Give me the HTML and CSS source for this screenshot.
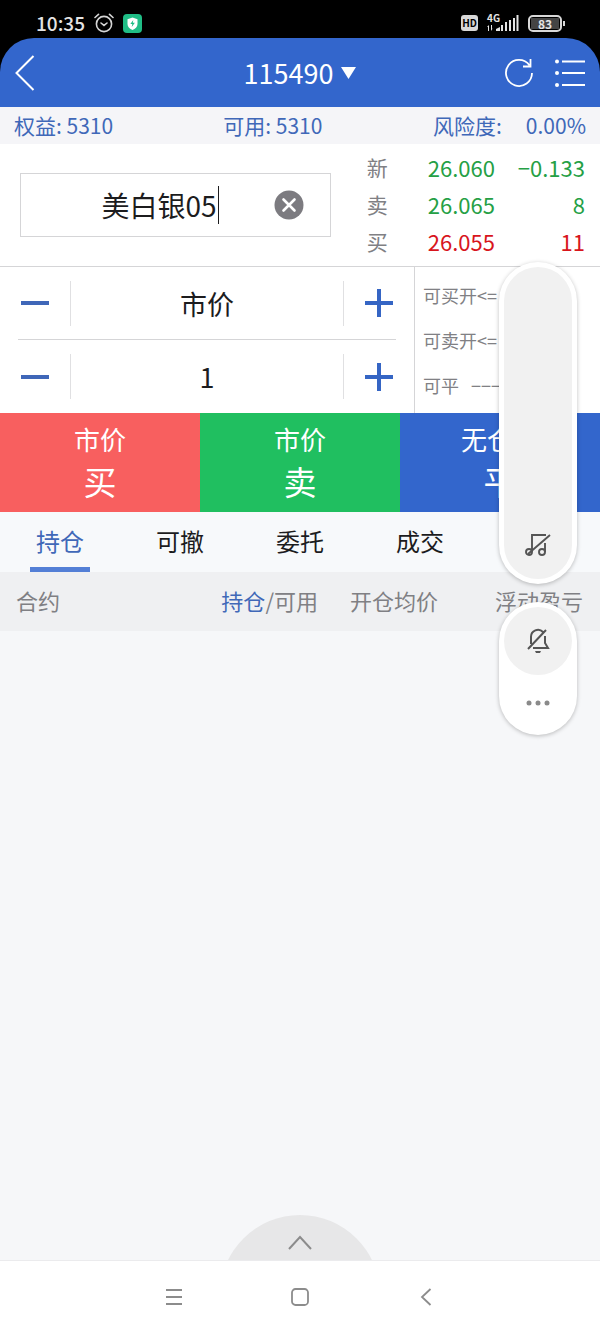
FILE: index.html
```
<!DOCTYPE html>
<html lang="zh-CN">
<head>
  <meta charset="UTF-8">
  <meta name="viewport" content="width=device-width, initial-scale=1.0">
  <title>115490</title>
  <link rel="stylesheet" href="styles.css">
</head>
<body>
  <div class="screen">
    <div class="status-bar">
      <span class="clock">10:35</span>
      <svg class="alarm" width="20" height="20" viewBox="0 0 20 20" fill="none" stroke="#d5d5d5" stroke-width="1.6" stroke-linecap="round">
        <circle cx="10" cy="11" r="7.6"/>
        <path d="M1 4.5 4.5 1.4M19 4.5 15.5 1.4M7 10l3 2.4 3-2.4"/>
      </svg>
      <svg width="19" height="19" viewBox="0 0 19 19">
        <rect width="19" height="19" rx="4" fill="#20bd86"/>
        <path d="M9.500 3.500 14.500 5.300V10c0 3-2.300 4.800-5 6-2.700-1.200-5-3-5-6V5.300z" fill="#fff"/>
        <path d="M10.300 6 7.300 10h2L8.700 13l3.200-4.200H9.800z" fill="#20bd86"/>
      </svg>
      <span class="spacer"></span>
      <span class="hd">HD</span>
      <span class="network">
        <span class="network-type">4G</span>
        <svg width="32" height="17" viewBox="0 0 32 17" fill="#e4e4e4">
          <path d="M0 12l2-2v6h-1v-4zM4 10h1v4l1-1-2 3z"/>
          <path d="M9 16v-2l4-2v4zM14 10h2v6h-2zM18 7h2v9h-2zM22 5h2v11h-2zM26 3h2v13h-2zM29.500 0h2v16h-2z"/>
        </svg>
      </span>
      <span class="battery"><span class="battery-level">83</span></span>
    </div>

    <header class="header">
      <button class="icon-btn back" aria-label="返回">
        <svg width="20" height="36" viewBox="0 0 20 36" fill="none" stroke="#fff" stroke-width="2"><path d="M18.500 1 1.500 18l17 17"/></svg>
      </button>
      <button class="account">115490
        <svg width="15" height="12" viewBox="0 0 15 12"><path d="M0 0h15L7.500 12z" fill="#fff"/></svg>
      </button>
      <div class="header-actions">
        <button class="icon-btn" aria-label="刷新">
          <svg width="30" height="30" viewBox="0 0 30 30" fill="none" stroke="#fff" stroke-width="1.800"><path d="M28 15A13 13 0 1 1 25.500 7.300M26.500 1v7.500H19"/></svg>
        </button>
        <button class="icon-btn" aria-label="菜单">
          <svg width="30" height="28" viewBox="0 0 30 28" fill="#fff"><path d="M7 1.500h23v2H7zM7 13h23v2H7zM7 25h23v2H7z"/><circle cx="2" cy="2.500" r="2"/><circle cx="2" cy="14" r="2"/><circle cx="2" cy="26" r="2"/></svg>
        </button>
      </div>
    </header>

    <div class="funds">
      <span>权益: 5310</span>
      <span>可用: 5310</span>
      <span class="risk"><span>风险度:</span><span>0.00%</span></span>
    </div>

    <section class="quote">
      <div class="contract">
        <input class="contract-input" type="text" aria-label="合约" value="美白银05">
        <button class="icon-btn" aria-label="清除">
          <svg width="30" height="30" viewBox="0 0 30 30"><circle cx="15" cy="15" r="14.500" fill="#7c7b80"/><path d="M9.500 9.500l11 11M20.500 9.500l-11 11" stroke="#fff" stroke-width="2.600" stroke-linecap="round"/></svg>
        </button>
      </div>
      <table class="prices">
        <tr class="down"><th scope="row">新</th><td>26.060</td><td>−0.133</td></tr>
        <tr class="down"><th scope="row">卖</th><td>26.065</td><td>8</td></tr>
        <tr class="up"><th scope="row">买</th><td>26.055</td><td>11</td></tr>
      </table>
    </section>

    <section class="order">
      <div class="steppers">
        <div class="stepper">
          <button class="icon-btn" aria-label="减价">
            <svg width="28" height="28" viewBox="0 0 28 28"><path d="M0 12h28v4H0z" fill="#3f67b8"/></svg>
          </button>
          <input type="text" aria-label="价格" value="市价">
          <button class="icon-btn" aria-label="加价">
            <svg width="28" height="28" viewBox="0 0 28 28"><path d="M0 12h12V0h4v12h12v4H16v12h-4V16H0z" fill="#3565c4"/></svg>
          </button>
        </div>
        <div class="stepper">
          <button class="icon-btn" aria-label="减少手数">
            <svg width="28" height="28" viewBox="0 0 28 28"><path d="M0 12h28v4H0z" fill="#3f67b8"/></svg>
          </button>
          <input type="text" aria-label="手数" value="1">
          <button class="icon-btn" aria-label="增加手数">
            <svg width="28" height="28" viewBox="0 0 28 28"><path d="M0 12h12V0h4v12h12v4H16v12h-4V16H0z" fill="#3565c4"/></svg>
          </button>
        </div>
      </div>
      <div class="limits">
        <span>可买开&lt;=</span>
        <span>可卖开&lt;=</span>
        <span class="closable"><span>可平</span><span>−−−</span></span>
      </div>
    </section>

    <div class="trade">
      <button class="buy"><span>市价</span><strong>买</strong></button>
      <button class="sell"><span>市价</span><strong>卖</strong></button>
      <button class="close"><span>无仓位</span><strong>平</strong></button>
    </div>

    <nav class="tabs">
      <a href="#" class="active">持仓</a>
      <a href="#">可撤</a>
      <a href="#">委托</a>
      <a href="#">成交</a>
    </nav>

    <table class="positions">
      <thead>
        <tr><th>合约</th><th><b>持仓</b>/可用</th><th>开仓均价</th><th>浮动盈亏</th></tr>
      </thead>
    </table>

    <main class="list">
      <button class="icon-btn" aria-label="展开">
        <svg width="144" height="45" viewBox="0 0 144 45"><circle cx="72" cy="80" r="80" fill="#e7e7e8"/><path d="M61 34l11-12 11 12" fill="none" stroke="#8c8c8c" stroke-width="2"/></svg>
      </button>
    </main>

    <nav class="system-nav">
      <button class="icon-btn" aria-label="最近任务">
        <svg width="18" height="18" viewBox="0 0 18 18" stroke="#8c8c8c" stroke-width="1.800"><path d="M1 2h16M1 9h16M1 16h16"/></svg>
      </button>
      <button class="icon-btn" aria-label="主页">
        <svg width="18" height="18" viewBox="0 0 18 18" fill="none" stroke="#8c8c8c" stroke-width="1.800"><rect x="1" y="1" width="16" height="16" rx="3.500"/></svg>
      </button>
      <button class="icon-btn" aria-label="返回">
        <svg width="18" height="18" viewBox="0 0 18 18" fill="none" stroke="#8c8c8c" stroke-width="1.800"><path d="M13.500 1 5 9l8.500 8"/></svg>
      </button>
    </nav>

    <!-- volume panel floats over the page -->
    <div class="volume">
      <div class="pill">
        <button class="track" aria-label="媒体音量">
          <svg width="26" height="24" viewBox="0 0 26 24" fill="none" stroke="#555" stroke-width="1.900"><path d="M7 19V2h14M20 10v9M3 21 25 2"/><circle cx="4" cy="19" r="3"/><circle cx="17" cy="19" r="3"/></svg>
        </button>
      </div>
      <div class="pill">
        <button class="mute" aria-label="静音">
          <svg width="24" height="26" viewBox="0 0 24 26" fill="none" stroke="#555" stroke-width="2"><path d="M5 16V9a7 7 0 0 1 12-5M19 8v7l3 5H7M2 21 20 2"/><path d="M9 23h6l-1 2h-4z" fill="#555" stroke="none"/></svg>
        </button>
        <button class="more" aria-label="更多">
          <svg width="24" height="6" viewBox="0 0 24 6" fill="#8a8a8a"><circle cx="3" cy="3" r="2.500"/><circle cx="12" cy="3" r="2.500"/><circle cx="21" cy="3" r="2.500"/></svg>
        </button>
      </div>
    </div>
  </div>
</body>
</html>
```
FILE: styles.css
```
:root {
  --blue: #3366cc;
  --text-blue: #4068b8;
  --red: #f85f5f;
  --green: #20bf60;
  --gray: #808084;
  --line: #d5d5d7;
  --page-bg: #f6f7f9;
}

* {
  box-sizing: border-box;
}

body {
  margin: 0;
  background: var(--page-bg);
  color: #1c1c1e;
  font-family: "Noto Sans CJK SC", sans-serif;
}

button,
input {
  font-family: inherit;
  color: inherit;
  margin: 0;
  padding: 0;
  border: none;
  background: none;
  outline: none;
}

button {
  cursor: pointer;
}

svg {
  display: block;
}

table {
  border-collapse: collapse;
}

th {
  font-weight: normal;
}

.screen {
  position: relative;
  display: flex;
  flex-direction: column;
  min-height: 100vh;
}

.icon-btn {
  display: flex;
  align-items: center;
  justify-content: center;
}

/* status bar */
.status-bar {
  display: flex;
  align-items: center;
  gap: 9px;
  height: 38px;
  padding: 8px 38px 0 36px;
  background: #000;
  color: #e4e4e4;
}

.clock {
  font-size: 19px;
  font-weight: 500;
  line-height: 20px;
}

.spacer {
  flex: 1;
}

.hd {
  padding: 0 1px;
  border-radius: 3px;
  background: #d8d8d8;
  color: #000;
  font-size: 10px;
  font-weight: 700;
  line-height: 16px;
}

.network {
  position: relative;
}

.network-type {
  position: absolute;
  top: -2px;
  left: 0;
  font-size: 10px;
  font-weight: 700;
  line-height: 9px;
}

.battery {
  position: relative;
  width: 34px;
  padding: 1px;
  border: 2px solid #d8d8d8;
  border-radius: 5px;
}

.battery::after {
  content: "";
  position: absolute;
  top: 4px;
  right: -5px;
  width: 2px;
  height: 5px;
  background: #d8d8d8;
}

.battery-level {
  display: block;
  background: #444;
  font-size: 12px;
  font-weight: 700;
  line-height: 11px;
  text-align: center;
}

/* header */
.header {
  display: grid;
  grid-template-columns: 1fr auto 1fr;
  align-items: center;
  height: 69px;
  padding: 0 15px;
  border-radius: 34px 34px 0 0;
  background: var(--blue);
  box-shadow: 0 -34px 0 34px #000;
  clip-path: inset(0);
  color: #fff;
}

.header .back {
  justify-self: start;
}

.account {
  display: flex;
  align-items: center;
  gap: 8px;
  font-size: 27px;
  line-height: 36px;
}

.header-actions {
  display: flex;
  align-items: center;
  justify-content: flex-end;
  gap: 21px;
}

.funds {
  display: grid;
  grid-template-columns: 35% 1fr auto;
  padding: 0 14px;
  background: #f5f5f8;
  color: var(--text-blue);
  font-size: 21px;
  line-height: 37px;
  column-gap: 9px;
}

.risk {
  display: flex;
  justify-content: flex-end;
  gap: 24px;
}

/* quote */
.quote {
  display: flex;
  align-items: center;
  gap: 36px;
  padding: 5px 15px 6px 20px;
  border-bottom: 1px solid var(--line);
  background: #fff;
}

.contract {
  flex: none;
  display: flex;
  align-items: center;
  justify-content: space-between;
  width: 55%;
  height: 64px;
  padding: 0 26px;
  border: 1px solid var(--line);
}

.contract-input {
  width: 118px;
  height: 38px;
  margin: 0 auto;
  border-right: 1px solid #1c1c1e;
  font-size: 28px;
}

.prices {
  flex: 1;
  font-size: 22px;
  line-height: 37px;
}

.prices tbody {
  display: block;
}

.prices tr {
  display: grid;
  grid-template-columns: 61px auto 1fr;
}

.prices th,
.prices td {
  padding: 0;
}

.prices th {
  color: var(--gray);
  font-size: 21px;
  text-align: left;
}

.prices td:last-child {
  text-align: right;
}

.down {
  color: #25a045;
}

.up {
  color: #d8151c;
}

/* order form */
.order {
  display: flex;
  background: #fff;
}

.steppers {
  width: 69%;
  padding: 0 18px;
}

.stepper {
  display: grid;
  grid-template-columns: 52px 1fr 52px;
  align-items: center;
  height: 73px;
}

.stepper:first-child {
  border-bottom: 1px solid var(--line);
}

.stepper .icon-btn:first-child {
  justify-content: flex-start;
  padding-left: 3px;
}

.stepper .icon-btn:last-child {
  justify-content: flex-end;
  padding-right: 3px;
}

.stepper input {
  width: 100%;
  height: 45px;
  border: 1px solid #e0e0e2;
  border-width: 0 1px;
  font-size: 27px;
  text-align: center;
}

.limits {
  flex: 1;
  display: flex;
  flex-direction: column;
  justify-content: center;
  padding-left: 8px;
  border-left: 1px solid var(--line);
  color: var(--gray);
  font-size: 18px;
  line-height: 45px;
}

.closable {
  display: flex;
  gap: 12px;
}

.trade {
  display: grid;
  grid-template-columns: repeat(3, 1fr);
  color: #fff;
}

.trade button {
  display: flex;
  flex-direction: column;
  align-items: center;
  padding: 6px 0 9px;
  font-size: 26px;
  line-height: 40px;
}

.trade strong {
  font-size: 33px;
  font-weight: normal;
  line-height: 44px;
}

.buy {
  background: var(--red);
}

.sell {
  background: var(--green);
}

.close {
  background: var(--blue);
}

/* tabs */
.tabs {
  display: grid;
  grid-template-columns: repeat(5, 1fr);
  background: #f7f9fb;
}

.tabs a {
  justify-self: center;
  padding: 2px 6px 0;
  border-bottom: 5px solid transparent;
  color: #1c1c1e;
  font-size: 24px;
  line-height: 53px;
  text-decoration: none;
}

.tabs .active {
  border-color: #537fd6;
  color: var(--text-blue);
}

.positions {
  width: 100%;
  table-layout: fixed;
  background: #eff0f2;
  color: var(--gray);
  font-size: 22px;
  line-height: 57px;
}

.positions th {
  width: 20%;
  padding: 0 0 2px;
  text-align: right;
  white-space: nowrap;
}

.positions th:first-child {
  width: 33%;
  padding-left: 16px;
  text-align: left;
}

.positions th:last-child {
  width: 27%;
  padding-right: 17px;
}

.positions b {
  color: var(--text-blue);
  font-weight: normal;
}

.list {
  flex: 1;
  display: flex;
  align-items: flex-end;
  justify-content: center;
}

.system-nav {
  display: flex;
  align-items: center;
  justify-content: center;
  gap: 108px;
  height: 73px;
  border-top: 1px solid #ebebed;
  background: #fff;
}

/* volume panel */
.volume {
  position: absolute;
  top: 262px;
  right: 23px;
  display: flex;
  flex-direction: column;
  gap: 18px;
}

.pill {
  width: 78px;
  padding: 5px;
  border-radius: 39px;
  background: #fff;
  box-shadow: 0 1px 4px rgba(0, 0, 0, 0.25);
}

.pill button {
  display: flex;
  justify-content: center;
  width: 100%;
  border-radius: 34px;
}

.track {
  align-items: flex-end;
  height: 312px;
  padding-bottom: 22px;
  background: #f1f1f1;
}

.mute {
  align-items: center;
  height: 68px;
  background: #f1f1f1;
}

.more {
  align-items: center;
  height: 55px;
}
```
